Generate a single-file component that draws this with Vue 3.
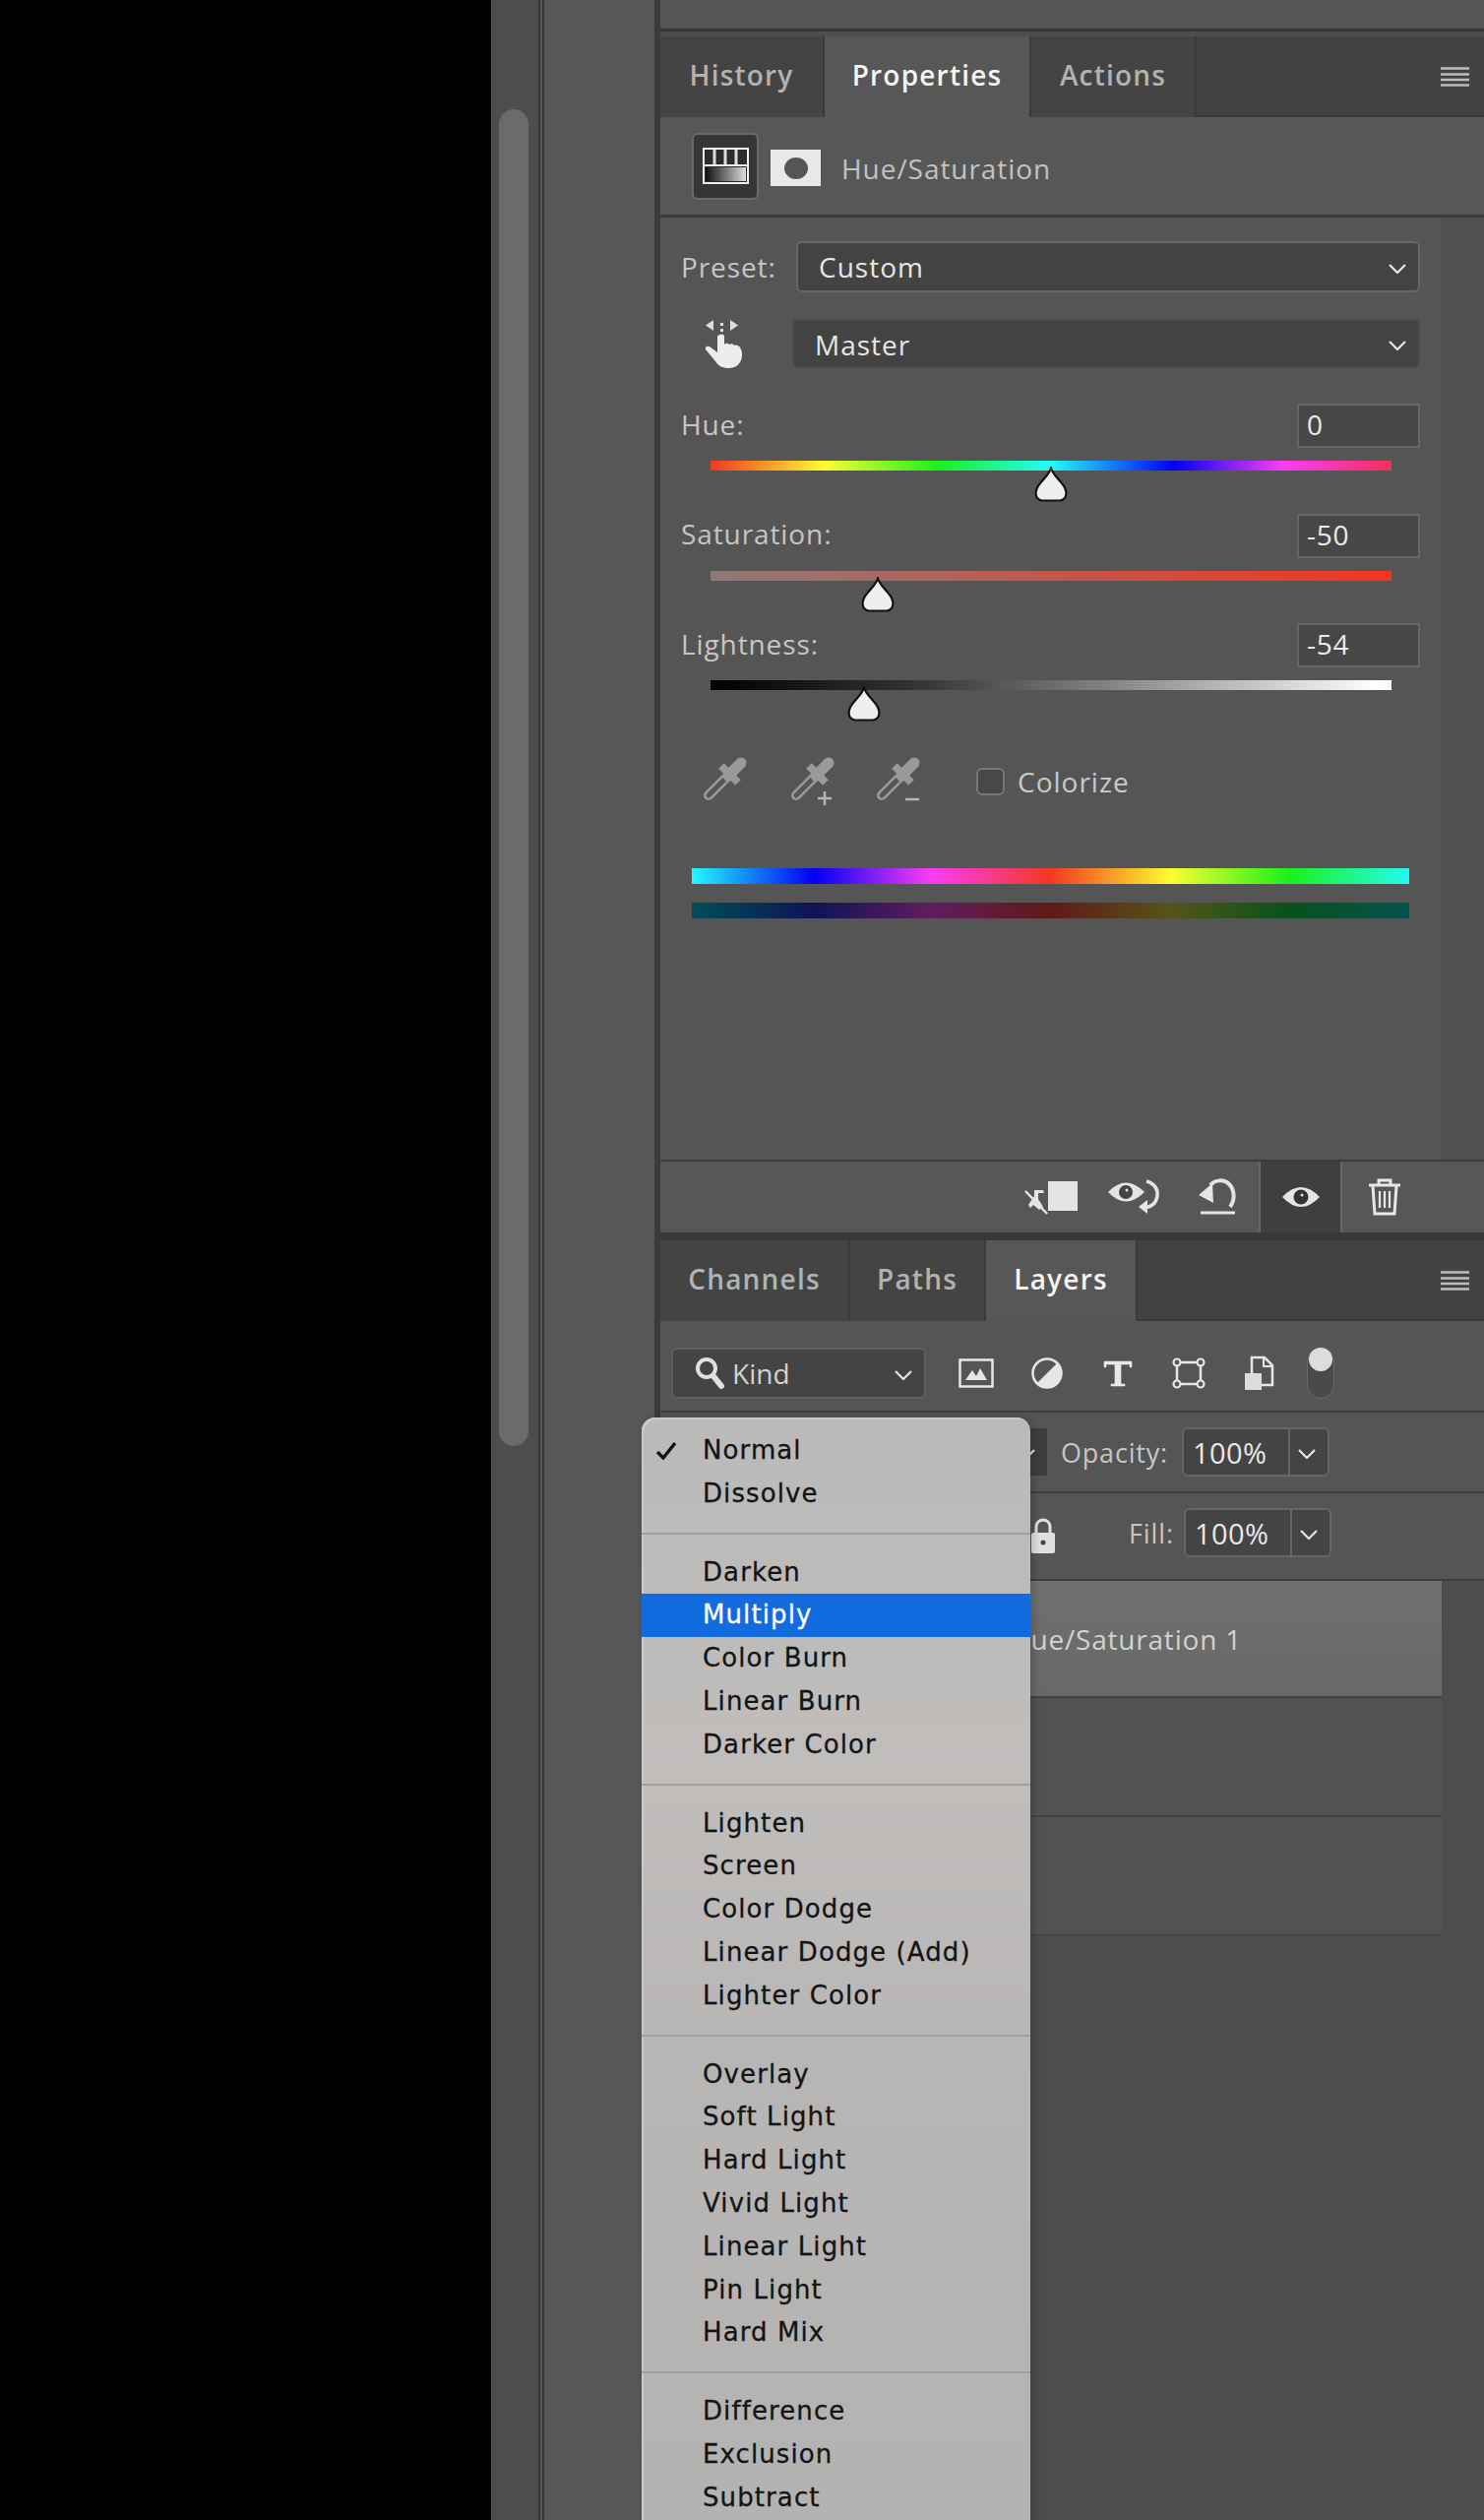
<script setup>
const sliders = [
  { name: 'Hue', value: '0', pos: 50, bar: 'hue' },
  { name: 'Saturation', value: '-50', pos: 24.5, bar: 'sat' },
  { name: 'Lightness', value: '-54', pos: 22.5, bar: 'light' }
]

const blendGroups = [
  ['Normal', 'Dissolve'],
  ['Darken', 'Multiply', 'Color Burn', 'Linear Burn', 'Darker Color'],
  ['Lighten', 'Screen', 'Color Dodge', 'Linear Dodge (Add)', 'Lighter Color'],
  ['Overlay', 'Soft Light', 'Hard Light', 'Vivid Light', 'Linear Light', 'Pin Light', 'Hard Mix'],
  ['Difference', 'Exclusion', 'Subtract']
]
</script>

<template>
  <div class="app">
    <div class="canvas"></div>
    <div class="track"><div class="thumb"></div></div>
    <div class="gutter"></div>
    <div class="strip"></div>

    <div class="dock">
      <div class="stub"></div>

      <section class="panel">
        <div class="tabs">
          <div class="tab" style="width: 167px">History</div>
          <div class="tab on" style="width: 210px">Properties</div>
          <div class="tab" style="width: 168px">Actions</div>
          <svg class="burger" viewBox="0 0 29 20"><path d="M0 1.5h29M0 7.5h29M0 13h29M0 18.5h29" /></svg>
        </div>

        <div class="head">
          <div class="adj-box">
            <svg width="47" height="37" viewBox="0 0 47 37">
              <defs>
                <linearGradient id="adjGrad">
                  <stop offset="0" stop-color="#111" />
                  <stop offset="1" stop-color="#ddd" />
                </linearGradient>
              </defs>
              <rect x="1" y="1" width="45" height="35" fill="#2c2c2c" stroke="#f0f0f0" stroke-width="2" />
              <path d="M12 2v15M23 2v15M34 2v15" stroke="#ddd" stroke-width="3" />
              <path d="M1 18h45" stroke="#f0f0f0" stroke-width="2" />
              <rect x="3" y="20" width="41" height="14" fill="url(#adjGrad)" />
            </svg>
          </div>
          <div class="mask"><span></span></div>
          <div class="head-title">Hue/Saturation</div>
        </div>

        <div class="body">
          <div class="body-main">
            <div class="row-preset">
              <label>Preset:</label>
              <div class="select">Custom
                <svg class="chev" viewBox="0 0 18 10"><path d="M1 1l8 8 8-8" /></svg>
              </div>
            </div>
            <div class="row-master">
              <svg class="hand" width="42" height="50" viewBox="0 0 42 50">
                <path d="M9 1v11L1 6.500zM26 1v11l8-5.500z" fill="#ddd" />
                <path d="M17.500 4v3M17.500 10v3" stroke="#ddd" stroke-width="3" />
                <path d="M16 16c2-1 4 0 4 2v8c2-2 4-1 5 0 2-1 4-1 5 1 2-1 5 0 6 2 2 3 3 8 1 13-2 5-6 8-13 8-5 0-10-2-13-7L1 31c-1-3 2-4 4-3l8 6V18c0-1 1-2 3-2z" fill="#ececec" />
              </svg>
              <div class="select">Master
                <svg class="chev" viewBox="0 0 18 10"><path d="M1 1l8 8 8-8" /></svg>
              </div>
            </div>

            <div v-for="s in sliders" :key="s.name" class="slider">
              <div class="slider-top">
                <label>{{ s.name }}:</label>
                <div class="num">{{ s.value }}</div>
              </div>
              <div class="bar" :class="s.bar">
                <svg class="knob" :style="{ left: s.pos + '%' }" width="36" height="37" viewBox="0 0 36 37">
                  <path d="M18 1.500C20 9 28 14 32 21.500 35 28 33 33.500 27 34.500H9C3 33.500 1 28 4 21.500 8 14 16 9 18 1.500z" fill="#efefef" stroke="#111" stroke-width="2.200" />
                </svg>
              </div>
            </div>

            <div class="row-tools">
              <svg class="dropper" width="47" height="50" viewBox="0 0 47 50">
                <path d="M7 39l20-20" stroke="#9a9a9a" stroke-width="10" stroke-linecap="round" />
                <path d="M7 39l20-20" stroke="#565656" stroke-width="5" stroke-linecap="round" />
                <path d="M20 9l17 17" stroke="#9a9a9a" stroke-width="8" />
                <path d="M27 19l13-13" stroke="#9a9a9a" stroke-width="11" stroke-linecap="round" />
              </svg>
              <svg class="dropper" width="47" height="50" viewBox="0 0 47 50">
                <path d="M7 39l20-20" stroke="#9a9a9a" stroke-width="10" stroke-linecap="round" />
                <path d="M7 39l20-20" stroke="#565656" stroke-width="5" stroke-linecap="round" />
                <path d="M20 9l17 17" stroke="#9a9a9a" stroke-width="8" />
                <path d="M27 19l13-13" stroke="#9a9a9a" stroke-width="11" stroke-linecap="round" />
                <path d="M29 42h14M36 35v14" stroke="#b5b5b5" stroke-width="2.500" />
              </svg>
              <svg class="dropper" width="47" height="50" viewBox="0 0 47 50">
                <path d="M7 39l20-20" stroke="#9a9a9a" stroke-width="10" stroke-linecap="round" />
                <path d="M7 39l20-20" stroke="#565656" stroke-width="5" stroke-linecap="round" />
                <path d="M20 9l17 17" stroke="#9a9a9a" stroke-width="8" />
                <path d="M27 19l13-13" stroke="#9a9a9a" stroke-width="11" stroke-linecap="round" />
                <path d="M31 43h14" stroke="#b5b5b5" stroke-width="2.500" />
              </svg>
              <div class="check"></div>
              <span class="check-label">Colorize</span>
            </div>

            <div class="spectrum top"></div>
            <div class="spectrum low"></div>
          </div>
          <div class="body-scroll"></div>
        </div>

        <div class="foot">
          <div class="foot-cell">
            <svg width="56" height="36" viewBox="0 0 56 36">
              <rect x="26" y="2" width="30" height="30" fill="#e4e4e4" />
              <path d="M3 12l22 23" fill="none" stroke="#e4e4e4" stroke-width="2.500" />
              <path d="M6 26l6-9V11h9l1 3h-6v6l5 8-4 3-6-5-3 3z" fill="#e4e4e4" />
            </svg>
          </div>
          <div class="foot-cell">
            <svg width="54" height="36" viewBox="0 0 54 36">
              <path d="M1 13Q19-6 38 13Q19 32 1 13z" fill="#e4e4e4" />
              <circle cx="19" cy="13" r="7" fill="#444" />
              <circle cx="20" cy="11" r="1.500" fill="#e4e4e4" />
              <path d="M40 2c8 2 12 8 11 15-1 7-6 11-13 12" fill="none" stroke="#e4e4e4" stroke-width="3.500" />
              <path d="M41 21v14l-9-7z" fill="#e4e4e4" />
            </svg>
          </div>
          <div class="foot-cell">
            <svg width="40" height="38" viewBox="0 0 40 38">
              <path d="M13 7C18 1 27 1 32 6 38 12 38 22 33 29" fill="none" stroke="#e4e4e4" stroke-width="4" />
              <path d="M1 17L15 5l1 20z" fill="#e4e4e4" />
              <path d="M3 35h35" stroke="#e4e4e4" stroke-width="3" />
            </svg>
          </div>
          <div class="foot-cell active">
            <svg width="40" height="26" viewBox="0 0 40 26">
              <path d="M1 13Q20-7 39 13Q20 33 1 13z" fill="#e4e4e4" />
              <circle cx="20" cy="13" r="7.500" fill="#333" />
              <circle cx="21" cy="11" r="1.500" fill="#e4e4e4" />
            </svg>
          </div>
          <div class="foot-cell">
            <svg width="34" height="38" viewBox="0 0 34 38">
              <path d="M1 7h32M11 7V2h12v5M5 8l2 28h20l2-28" fill="none" stroke="#e8e8e8" stroke-width="3" />
              <path d="M12 13v17M17 13v17M22 13v17" stroke="#e8e8e8" stroke-width="2.200" />
            </svg>
          </div>
        </div>
      </section>

      <div class="panel-gap"></div>

      <section class="panel layers">
        <div class="tabs">
          <div class="tab" style="width: 193px">Channels</div>
          <div class="tab" style="width: 138px">Paths</div>
          <div class="tab on" style="width: 154px">Layers</div>
          <svg class="burger" viewBox="0 0 29 20"><path d="M0 1.5h29M0 7.5h29M0 13h29M0 18.5h29" /></svg>
        </div>

        <div class="filter">
          <div class="kind">
            <svg width="30" height="34" viewBox="0 0 30 34">
              <circle cx="12" cy="12" r="9" fill="none" stroke="#e0e0e0" stroke-width="4" />
              <path d="M19 20l8 10" stroke="#e0e0e0" stroke-width="6" stroke-linecap="round" />
            </svg>
            <span>Kind</span>
            <svg class="chev" viewBox="0 0 18 10"><path d="M1 1l8 8 8-8" /></svg>
          </div>
          <div class="filter-icons">
            <svg width="36" height="30" viewBox="0 0 36 30">
              <rect x="1.500" y="1.500" width="33" height="27" fill="none" stroke="#e6e6e6" stroke-width="2.500" />
              <path d="M7 22l7-10 4 6 4-8 7 12z" fill="#e6e6e6" />
            </svg>
            <svg width="36" height="32" viewBox="0 0 36 32">
              <circle cx="18" cy="16" r="14.500" fill="#555" stroke="#e6e6e6" stroke-width="2.500" />
              <path d="M28.300 5.700A14.500 14.500 0 0 1 7.700 26.300z" fill="#e6e6e6" />
            </svg>
            <svg width="36" height="30" viewBox="0 0 36 30">
              <path d="M4 9V3h28v6h-2V6H21v20h4v2H11v-2h4V6H6v3z" fill="#e8e8e8" stroke="#e8e8e8" stroke-width="0.600" />
            </svg>
            <svg width="36" height="34" viewBox="0 0 36 34">
              <rect x="6" y="6" width="24" height="22" fill="none" stroke="#e6e6e6" stroke-width="2.500" />
              <circle cx="6" cy="6" r="3.500" fill="#555" stroke="#e6e6e6" stroke-width="2.200" />
              <circle cx="30" cy="6" r="3.500" fill="#555" stroke="#e6e6e6" stroke-width="2.200" />
              <circle cx="6" cy="28" r="3.500" fill="#555" stroke="#e6e6e6" stroke-width="2.200" />
              <circle cx="30" cy="28" r="3.500" fill="#555" stroke="#e6e6e6" stroke-width="2.200" />
            </svg>
            <svg width="36" height="36" viewBox="0 0 36 36">
              <path d="M10 18V2h13l8 8v20H20" fill="none" stroke="#e6e6e6" stroke-width="2.500" />
              <path d="M22 2v9h9" fill="none" stroke="#e6e6e6" stroke-width="2" />
              <rect x="3" y="18" width="17" height="17" fill="#dcdcdc" />
            </svg>
          </div>
          <div class="toggle"><span></span></div>
        </div>

        <div class="blend-row">
          <div class="blend-select">
            <svg class="chev" viewBox="0 0 18 10"><path d="M1 1l8 8 8-8" /></svg>
          </div>
          <label>Opacity:</label>
          <div class="pct"><span>100%</span><i><svg class="chev" viewBox="0 0 18 10"><path d="M1 1l8 8 8-8" /></svg></i></div>
        </div>

        <div class="lock-row">
          <svg class="lock" width="26" height="36" viewBox="0 0 26 36">
            <path d="M6 16V9a7 7 0 0 1 14 0v7" fill="none" stroke="#e0e0e0" stroke-width="3" />
            <rect x="1" y="15" width="24" height="21" rx="2" fill="#e0e0e0" />
            <circle cx="13" cy="25" r="2.500" fill="#444" />
          </svg>
          <label>Fill:</label>
          <div class="pct"><span>100%</span><i><svg class="chev" viewBox="0 0 18 10"><path d="M1 1l8 8 8-8" /></svg></i></div>
        </div>

        <div class="list">
          <div class="layer sel"><span>Hue/Saturation 1</span></div>
          <div class="layer"></div>
          <div class="layer"></div>
        </div>
      </section>
    </div>

    <div class="menu">
      <svg class="tick" width="22" height="20" viewBox="0 0 22 20"><path d="M2 11l6 6L20 2" fill="none" stroke="#111" stroke-width="3.400" /></svg>
      <template v-for="(group, i) in blendGroups" :key="i">
        <hr v-if="i > 0" />
        <div v-for="item in group" :key="item" class="item" :class="{ hot: item === 'Multiply' }">{{ item }}</div>
      </template>
    </div>
  </div>
</template>

<style>
html, body {
  margin: 0;
  background: #000;
}
</style>

<style scoped>
.app {
  position: relative;
  width: 1508px;
  height: 2560px;
  overflow: hidden;
  display: flex;
  font-family: "Open Sans", "Liberation Sans", sans-serif;
  background: #000;
}
.canvas {
  width: 499px;
  flex: none;
  background: #000;
}
.track {
  width: 48px;
  flex: none;
  background: #4d4d4d;
  padding: 111px 10px 0 8px;
  box-sizing: border-box;
}
.thumb {
  height: 1358px;
  border-radius: 15px;
  background: #6b6b6b;
}
.gutter {
  width: 6px;
  flex: none;
  background: #555;
  border-left: 2px solid #383838;
  border-right: 2px solid #383838;
  box-sizing: border-box;
}
.strip {
  width: 112px;
  flex: none;
  background: #575757;
}
.dock {
  flex: 1;
  border-left: 6px solid #3b3b3b;
  background: #4d4d4d;
  display: flex;
  flex-direction: column;
}
.stub {
  height: 29px;
  background: #555;
  border-bottom: 3px solid #353535;
  margin-bottom: 5px;
}
.panel {
  display: flex;
  flex-direction: column;
}
.tabs {
  position: relative;
  display: flex;
  height: 82px;
  background: #424242;
  box-sizing: border-box;
  border-bottom: 2px solid #3a3a3a;
}
.tab {
  flex: none;
  box-sizing: border-box;
  height: 82px;
  text-align: center;
  line-height: 78px;
  font-size: 28px;
  letter-spacing: 1.2px;
  font-weight: 600;
  color: #b2b2b2;
  background: #444;
  border-right: 2px solid #3a3a3a;
}
.tab.on {
  background: #575757;
  color: #f4f4f4;
}
.burger {
  position: absolute;
  right: 15px;
  top: 31px;
  width: 29px;
  height: 20px;
  stroke: #bdbdbd;
  stroke-width: 2.4;
}
.head {
  height: 99px;
  background: #575757;
  display: flex;
  align-items: center;
  padding-left: 32px;
}
.adj-box {
  width: 68px;
  height: 68px;
  box-sizing: border-box;
  background: #363636;
  border: 2px solid #6a6a6a;
  border-radius: 6px;
  display: flex;
  align-items: center;
  justify-content: center;
}
.mask {
  width: 51px;
  height: 37px;
  background: #e8e8e8;
  margin: 4px 0 0 12px;
  display: flex;
  align-items: center;
  justify-content: center;
}
.mask span {
  width: 24px;
  height: 22px;
  border-radius: 50%;
  background: #555;
}
.head-title {
  margin: 4px 0 0 21px;
  font-size: 28px;
  letter-spacing: 0.95px;
  color: #c2c2c2;
}
.body {
  height: 962px;
  box-sizing: border-box;
  display: flex;
  border-top: 3px solid #3c3c3c;
  border-bottom: 2px solid #3c3c3c;
  background: #555;
}
.body-main {
  width: 793px;
  flex: none;
  box-sizing: border-box;
  padding: 24px 21px 0;
}
.body-scroll {
  flex: 1;
  background: #505050;
}
label {
  font-size: 28px;
  letter-spacing: 0.9px;
  color: #c6c6c6;
}
.row-preset {
  display: flex;
  align-items: center;
}
.row-preset label {
  width: 117px;
  flex: none;
}
.select {
  position: relative;
  flex: 1;
  height: 52px;
  box-sizing: border-box;
  background: #434343;
  border: 2px solid #666;
  border-radius: 6px;
  line-height: 48px;
  padding-left: 21px;
  font-size: 28px;
  letter-spacing: 1px;
  color: #e6e6e6;
}
.chev {
  position: absolute;
  right: 12px;
  top: 50%;
  width: 18px;
  height: 10px;
  margin-top: -3px;
  fill: none;
  stroke: #e6e6e6;
  stroke-width: 2.2;
}
.row-master {
  display: flex;
  align-items: center;
  margin-top: 27px;
}
.hand {
  flex: none;
  margin: 0 47px 0 24px;
}
.row-master .select {
  height: 50px;
  border-color: #4a4a4a;
}
.slider {
  margin-top: 36px;
}
.slider + .slider {
  margin-top: 43.5px;
}
.slider-top {
  display: flex;
  align-items: center;
  justify-content: space-between;
  height: 45px;
}
.slider-top label {
  margin-top: -4px;
}
.num {
  width: 125px;
  height: 45px;
  box-sizing: border-box;
  background: #474747;
  border: 2px solid #666;
  line-height: 39px;
  padding-left: 8px;
  font-size: 28px;
  letter-spacing: 0.8px;
  color: #ececec;
}
.bar {
  position: relative;
  height: 10px;
  margin: 13px 29px 0 30px;
}
.knob {
  position: absolute;
  top: 6px;
  margin-left: -18px;
}
.hue {
  background: linear-gradient(90deg, #f4381f, #fdfc2e 16.7%, #19f21a 33.3%, #22fbfd 50%, #0000f5 68%, #fc3cf8 84%, #f4305a);
}
.sat {
  background: linear-gradient(90deg, #8f7a78, #f4351f);
}
.light {
  background: linear-gradient(90deg, #000, #333 30%, #888 60%, #fff 98%);
}
.row-tools {
  display: flex;
  align-items: center;
  height: 50px;
  margin-top: 68px;
  padding-left: 21px;
}
.dropper {
  flex: none;
  margin-right: 42px;
}
.dropper:nth-child(2) {
  margin-right: 40px;
}
.dropper:nth-child(3) {
  margin-right: 56px;
}
.check {
  width: 29px;
  height: 28px;
  box-sizing: border-box;
  background: #484848;
  border: 2px solid #777;
  border-radius: 6px;
}
.check-label {
  margin-left: 13px;
  font-size: 28px;
  letter-spacing: 1px;
  color: #cacaca;
}
.spectrum {
  height: 16px;
  margin: 0 11px;
}
.spectrum.top {
  margin-top: 63px;
  background: linear-gradient(90deg, #22fbfd, #0000f5 17%, #fc3cf8 33.3%, #f4381f 50%, #fdfc2e 66.7%, #19f21a 83.3%, #22fbf0);
}
.spectrum.low {
  margin-top: 19px;
  background: linear-gradient(90deg, #014e55, #0f1357 17%, #611c5e 33.3%, #5f1a18 50%, #555419 66.7%, #07521d 83.3%, #06524f);
}
.foot {
  height: 72px;
  background: #575757;
  display: flex;
  justify-content: flex-end;
  padding-right: 59px;
}
.foot-cell {
  width: 85px;
  height: 72px;
  display: flex;
  align-items: center;
  justify-content: center;
}
.foot-cell.active {
  background: #3f3f3f;
  box-shadow: inset 2px 0 #666, inset -2px 0 #666;
}
.panel-gap {
  height: 8px;
  background: #383838;
}
.filter {
  height: 93px;
  box-sizing: border-box;
  background: #555;
  border-bottom: 2px solid #3e3e3e;
  display: flex;
  align-items: center;
  padding: 14px 0 0 11px;
}
.kind {
  position: relative;
  width: 259px;
  height: 52px;
  box-sizing: border-box;
  flex: none;
  background: #444;
  border: 2px solid #5f5f5f;
  border-radius: 6px;
  display: flex;
  align-items: center;
  padding-left: 22px;
  color: #d2d2d2;
  font-size: 28px;
}
.kind span {
  margin-left: 8px;
}
.filter-icons {
  display: flex;
  align-items: center;
  gap: 36px;
  margin-left: 33px;
}
.toggle {
  position: relative;
  width: 28px;
  height: 52px;
  box-sizing: border-box;
  margin-left: 30px;
  background: #4a4a4a;
  border: 1px solid #6a6a6a;
  border-radius: 14px;
}
.toggle span {
  position: absolute;
  left: 1px;
  top: -1px;
  width: 24px;
  height: 24px;
  border-radius: 50%;
  background: #dcdcdc;
}
.blend-row, .lock-row {
  display: flex;
  align-items: center;
  background: #555;
  box-sizing: border-box;
  border-bottom: 2px solid #3e3e3e;
}
.blend-row {
  height: 82px;
}
.lock-row {
  height: 89px;
  padding-bottom: 7px;
}
.blend-select {
  position: relative;
  width: 368px;
  height: 48px;
  margin-left: 25px;
  flex: none;
  background: #3e3e3e;
}
.blend-row label {
  margin-left: 14px;
  width: 123px;
  flex: none;
  font-size: 27px;
  letter-spacing: 0.8px;
}
.lock {
  margin-left: 376px;
  margin-top: 6px;
  flex: none;
}
.lock-row label {
  margin-left: 74px;
  width: 56px;
  flex: none;
  font-size: 27px;
}
.pct {
  display: flex;
  width: 150px;
  height: 50px;
  box-sizing: border-box;
  border: 2px solid #666;
  border-radius: 6px;
  background: #444;
  font-size: 29px;
  line-height: 48px;
  letter-spacing: 0.4px;
  color: #e8e8e8;
}
.pct span {
  width: 108px;
  box-sizing: border-box;
  padding-left: 9px;
  border-right: 2px solid #666;
}
.pct i {
  position: relative;
  flex: 1;
}
.list {
  flex: none;
}
.layer {
  height: 121px;
  box-sizing: border-box;
  width: 794px;
  background: #525252;
  border-bottom: 2px solid #434343;
  display: flex;
  align-items: center;
  font-size: 28px;
  letter-spacing: 0.8px;
  color: #d2d2d2;
}
.layer.sel {
  height: 119px;
  background: linear-gradient(#707070, #686868);
  padding-left: 355px;
}
.menu {
  position: absolute;
  left: 652px;
  top: 1440px;
  width: 395px;
  height: 1200px;
  box-sizing: border-box;
  padding-top: 12px;
  border-radius: 14px 14px 0 0;
  background: linear-gradient(#bababa, #c0bdbb 30%, #b8b6b5 55%, #b2b2b2);
  box-shadow: inset 2px 2px 0 #c9c9c9, 3px 0 8px rgba(0, 0, 0, 0.2);
  font-family: "DejaVu Sans", sans-serif;
}
.tick {
  position: absolute;
  left: 14px;
  top: 24px;
}
.item {
  height: 43.8px;
  line-height: 43.8px;
  padding-left: 62px;
  font-size: 26px;
  letter-spacing: 1.1px;
  -webkit-text-stroke: 0.3px currentColor;
  color: #141414;
}
.item.hot {
  background: #126ce0;
  color: #fff;
}
hr {
  height: 2px;
  margin: 17px 0;
  border: 0;
  background: #9f9f9f;
}
</style>
